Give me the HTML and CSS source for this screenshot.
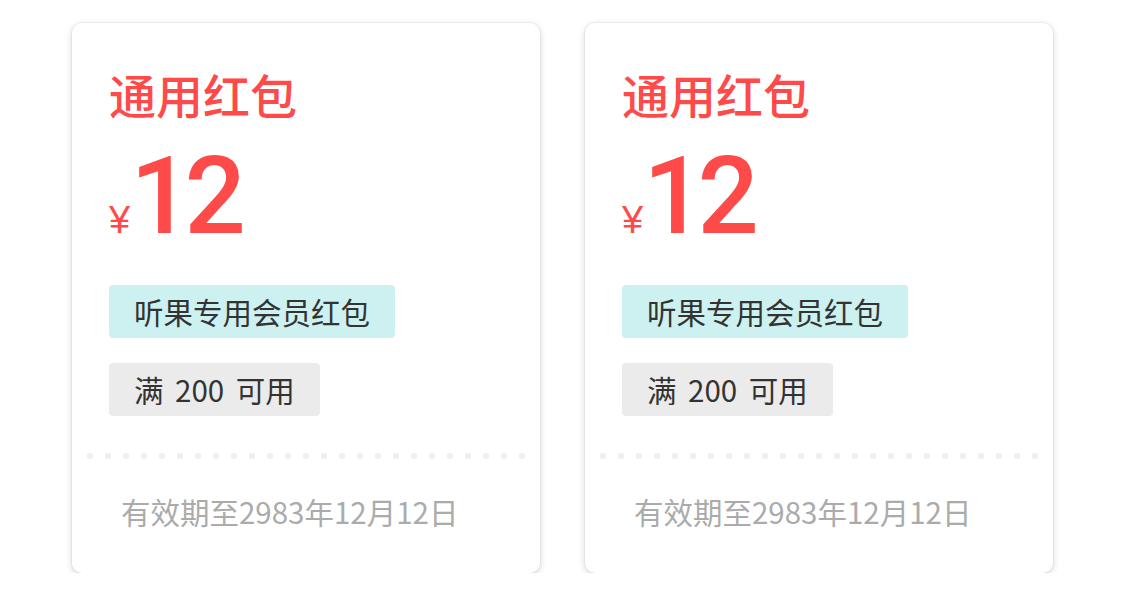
FILE: index.html
```html
<!DOCTYPE html>
<html lang="zh">
<head>
<meta charset="utf-8">
<link rel="stylesheet" href="styles.css">
</head>
<body>
<div class="list">
  <div class="card">
    <div class="top">
      <div class="title">通用红包</div>
      <div class="price"><span class="yen">¥</span><span class="amount">12</span></div>
      <div class="tags">
        <span class="tag tag-blue">听果专用会员红包</span>
        <span class="tag tag-grey">满 200 可用</span>
      </div>
    </div>
    <div class="dots"></div>
    <div class="date">有效期至2983年12月12日</div>
  </div>
  <div class="card">
    <div class="top">
      <div class="title">通用红包</div>
      <div class="price"><span class="yen">¥</span><span class="amount">12</span></div>
      <div class="tags">
        <span class="tag tag-blue">听果专用会员红包</span>
        <span class="tag tag-grey">满 200 可用</span>
      </div>
    </div>
    <div class="dots"></div>
    <div class="date">有效期至2983年12月12日</div>
  </div>
</div>
</body>
</html>
```

FILE: styles.css
```css
html, body {
  margin: 0;
  padding: 0;
  background: #ffffff;
  font-family: "Noto Sans CJK SC", "Noto Sans", sans-serif;
}

.list {
  display: flex;
  gap: 45px;
  padding: 23px 0 0 72px;
}

.card {
  width: 468px;
  height: 550px;
  box-sizing: border-box;
  background: #fff;
  border-radius: 10px;
  box-shadow: 0 0 0 1px rgba(0, 0, 0, 0.035), 0 2px 7px rgba(0, 0, 0, 0.17);
  display: flex;
  flex-direction: column;
}

.top {
  padding: 46px 38px 0 37px;
}

.title {
  font-size: 47px;
  line-height: 50px;
  font-weight: 500;
  color: #ff4a4a;
}

.price {
  display: flex;
  align-items: baseline;
  gap: 0;
  margin-top: 23px;
  color: #ff4a4a;
  font-family: Roboto, "Liberation Sans", Arial, sans-serif;
}

.yen {
  font-size: 38px;
  line-height: 1;
  font-family: "Liberation Sans", Arial, sans-serif;
}

.amount {
  font-size: 108px;
  line-height: 108px;
  font-weight: 500;
  letter-spacing: -7px;
}

.tags {
  display: flex;
  flex-direction: column;
  align-items: flex-start;
  gap: 25px;
  margin-top: 35px;
}

.tag {
  display: inline-block;
  height: 53px;
  line-height: 53px;
  padding: 0 25px;
  font-size: 29.5px;
  color: #333;
  border-radius: 4px;
}

.tag-blue {
  background: #cdf1f1;
}

.tag-grey {
  background: #ebebeb;
  word-spacing: 5px;
}

.dots {
  margin: 37px 15px 0 15px;
  height: 6px;
  background-image: radial-gradient(circle, #f0f0f0 3px, transparent 3.3px);
  background-size: 18px 6px;
  background-position: -6px 0;
}

.date {
  margin-top: 32px;
  padding-left: 49px;
  font-size: 29.5px;
  line-height: 40px;
  color: #ababab;
}
```
